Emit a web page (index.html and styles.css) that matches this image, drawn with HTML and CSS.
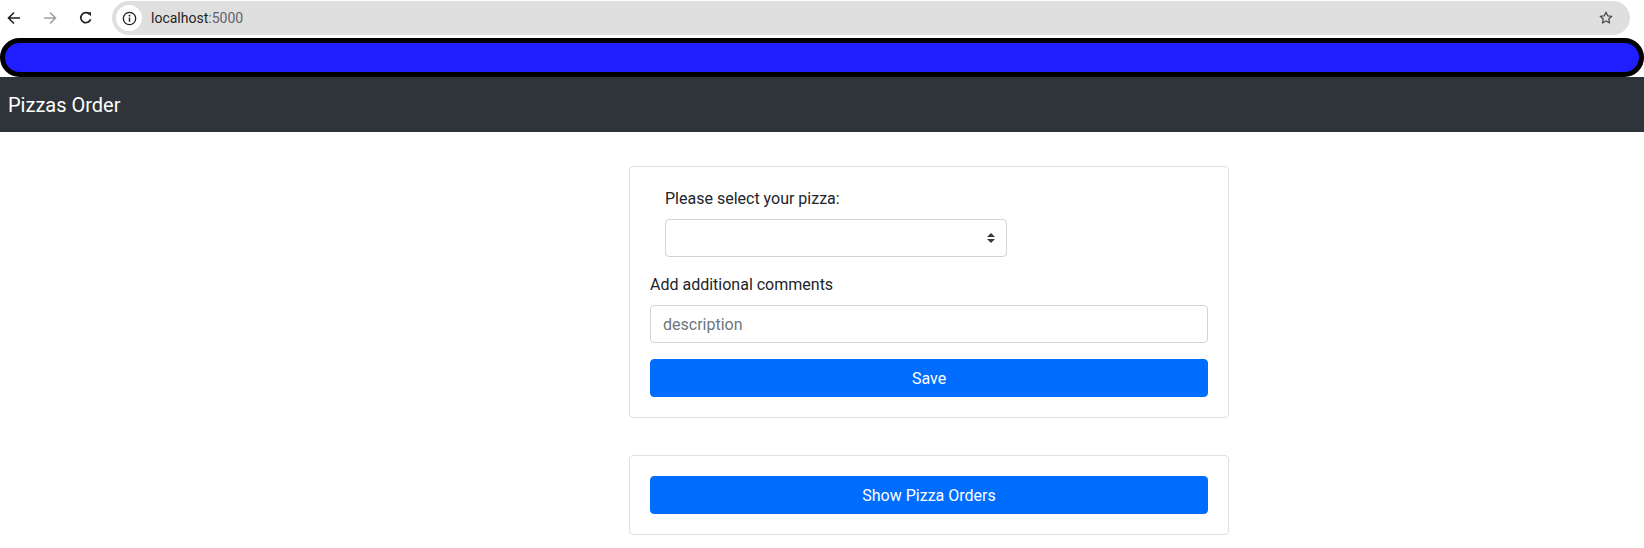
FILE: index.html
```html
<!DOCTYPE html>
<html lang="en">
<head>
<meta charset="utf-8">
<title>Pizzas Order</title>
<link rel="stylesheet" href="styles.css">
</head>
<body>
<div class="chrome">
  <div class="navbtns">
    <svg class="nb" width="14" height="14" viewBox="0 0 14 14"><path d="M13 7H2M7 1.5L1.5 7 7 12.5" fill="none" stroke="#1f1f1f" stroke-width="1.6"/></svg>
    <svg class="nb" width="14" height="14" viewBox="0 0 14 14"><path d="M1 7h11M7 1.5L12.5 7 7 12.5" fill="none" stroke="#a0a0a0" stroke-width="1.6"/></svg>
    <svg class="nb" width="14" height="14" viewBox="0 0 14 14"><path d="M11.6 8.2A5 5 0 1 1 10.4 3.2" fill="none" stroke="#1f1f1f" stroke-width="1.7"/><path d="M8 1.2h4v4z" fill="#1f1f1f"/></svg>
  </div>
  <div class="omni">
    <span class="info"><svg width="15" height="15" viewBox="0 0 16 16"><circle cx="8" cy="8" r="6.6" fill="none" stroke="#1f1f1f" stroke-width="1.4"/><rect x="7.25" y="7" width="1.5" height="4.5" fill="#1f1f1f"/><circle cx="8" cy="5" r="0.95" fill="#1f1f1f"/></svg></span>
    <span class="url"><span class="host">localhost</span><span class="port">:5000</span></span>
    <svg class="star" width="16" height="16" viewBox="0 0 24 24"><path d="M12 3.2l2.6 5.6 6.1.6-4.6 4.1 1.3 6-5.4-3.1-5.4 3.1 1.3-6L3.3 9.4l6.1-.6z" fill="none" stroke="#474747" stroke-width="1.8" stroke-linejoin="round"/></svg>
  </div>
</div>
<div class="bluebar"></div>
<nav class="navbar"><span class="brand">Pizzas Order</span></nav>
<main class="page">
  <section class="card">
    <div class="pick">
      <label class="lbl" for="pizza">Please select your pizza:</label>
      <div class="selectwrap">
        <select id="pizza" class="sel"><option></option></select>
        <svg class="arrows" width="8" height="10" viewBox="0 0 4 5"><path d="M2 0L0 2h4zm0 5L0 3h4z" fill="#343a40"/></svg>
      </div>
    </div>
    <label class="lbl" for="desc">Add additional comments</label>
    <input id="desc" class="inp" type="text" placeholder="description">
    <button class="btn save">Save</button>
  </section>
  <section class="card second">
    <button class="btn">Show Pizza Orders</button>
  </section>
</main>
</body>
</html>
```

FILE: styles.css
```css
* { box-sizing: border-box; }
body {
  margin: 0;
  font-family: Roboto, "Liberation Sans", Arial, sans-serif;
  color: #212529;
  background: #fff;
}
.chrome {
  height: 38px;
  display: flex;
  align-items: flex-start;
  background: #fff;
}
.navbtns {
  display: flex;
  gap: 22px;
  padding: 11px 0 0 7px;
  width: 112px;
}
.nb { display: block; }
.omni {
  flex: 1;
  margin: 1px 14px 0 0;
  height: 34px;
  border-radius: 17px;
  background: #dfdfdf;
  display: flex;
  align-items: center;
  padding: 0 16px 0 4px;
}
.info {
  width: 26px;
  height: 26px;
  border-radius: 50%;
  background: #fff;
  display: flex;
  align-items: center;
  justify-content: center;
}
.info svg { display: block; }
.url {
  margin-left: 9px;
  font-size: 14px;
  flex: 1;
}
.host { color: #1f1f1f; }
.port { color: #5f6368; }
.star { display: block; }
.bluebar {
  height: 39px;
  border: 5px solid #000;
  border-radius: 20px;
  background: #1e1eff;
}
.navbar {
  height: 55px;
  background: #2f333a;
  display: flex;
  align-items: center;
  padding: 0 8px;
}
.brand {
  color: #fff;
  font-size: 20px;
  line-height: 30px;
}
.page {
  padding: 34px 0 0 629px;
}
.card {
  width: 600px;
  border: 1px solid #dfdfdf;
  border-radius: 4px;
  padding: 20px;
}
.second { margin-top: 37px; }
.pick {
  padding: 0 15px;
  margin-bottom: 16px;
}
.lbl {
  display: block;
  font-size: 16px;
  line-height: 24px;
  margin-bottom: 8px;
}
.selectwrap {
  position: relative;
  width: 342px;
}
.sel {
  display: block;
  width: 342px;
  height: 38px;
  border: 1px solid #ced4da;
  border-radius: 4px;
  background: #fff;
  appearance: none;
  -webkit-appearance: none;
  font: inherit;
  padding: 6px 28px 6px 12px;
}
.arrows {
  position: absolute;
  right: 12px;
  top: 14px;
}
.inp {
  display: block;
  width: 100%;
  height: 38px;
  border: 1px solid #ced4da;
  border-radius: 4px;
  padding: 6px 12px;
  font: inherit;
  font-size: 16px;
  color: #495057;
}
.inp::placeholder { color: #6c757d; }
.btn {
  display: block;
  width: 100%;
  height: 38px;
  border: 1px solid #006dff;
  border-radius: 4px;
  background: #006dff;
  color: #fff;
  font: inherit;
  font-size: 16px;
}
.save { margin-top: 16px; }
```
